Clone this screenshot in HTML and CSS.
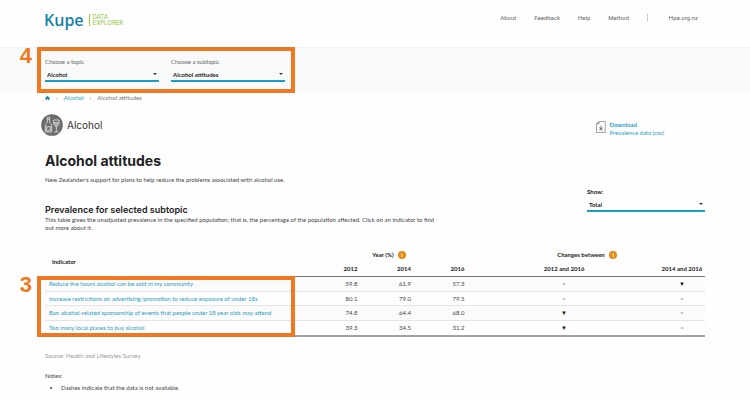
FILE: index.html
```html
<!DOCTYPE html>
<html lang="en">
<head>
<meta charset="utf-8">
<title>Kupe Data Explorer</title>
<link rel="stylesheet" href="styles.css">
</head>
<body>
<header class="header">
  <a class="logo" href="#"><span class="logo-name">Kupe</span><span class="logo-tag">DATA<br>EXPLORER</span></a>
  <nav class="nav">
    <a href="#">About</a>
    <a href="#">Feedback</a>
    <a href="#">Help</a>
    <a href="#">Method</a>
    <a class="nav-ext" href="#">Hpa.org.nz</a>
  </nav>
</header>

<section class="band">
  <div class="field">
    <label for="topic">Choose a topic</label>
    <div class="select"><select id="topic"><option>Alcohol</option></select></div>
  </div>
  <div class="field">
    <label for="subtopic">Choose a subtopic</label>
    <div class="select"><select id="subtopic"><option>Alcohol attitudes</option></select></div>
  </div>
  <div class="callout callout-filters"><span class="callout-number">4</span></div>
</section>

<main class="main">
  <nav class="crumbs">
    <a href="#" aria-label="Home"><svg class="home" viewBox="0 0 12 10"><path d="M6 0 12 5H10.500V10H7V6.500H5V10H1.500V5H0Z"/></svg></a>
    <span>›</span>
    <a href="#">Alcohol</a>
    <span>›</span>
    <span>Alcohol attitudes</span>
  </nav>

  <div class="topic-row">
    <div class="topic">
      <svg class="topic-icon" viewBox="0 0 66 66">
        <circle cx="33" cy="33" r="32.500" fill="#6b6b6b"/>
        <g fill="none" stroke="#e6e6e6" stroke-width="2.500" stroke-linejoin="round">
          <path d="M19 10h7v14c0 4 6 5 6 11v19H13V35c0-6 6-7 6-11Z"/>
          <path d="M19 16h7M17 38h11v11H17Z"/>
          <path d="M38 18h16c2 10 0 19-8 19s-10-9-8-19ZM46 37v16M39 54h14M38 26h16"/>
        </g>
        <path d="M40 28h12c0 5-2 7-6 7s-6-2-6-7Z" fill="#bdbdbd"/>
      </svg>
      <span>Alcohol</span>
    </div>
    <a class="download" href="#">
      <svg class="file" viewBox="0 0 28 34"><path d="M8 1.500H26V32.500H1.500V8Z" fill="#fff" stroke="#777" stroke-width="2"/><path d="M8 1.500V8H1.500" fill="none" stroke="#555" stroke-width="2"/><path d="M14 13v8M10 18l4 5 4-5M9 25h10" fill="none" stroke="#444" stroke-width="2"/></svg>
      <span><strong>Download</strong><br>Prevalence data (csv)</span>
    </a>
  </div>

  <h1>Alcohol attitudes</h1>
  <p class="lead">New Zealander's support for plans to help reduce the problems associated with alcohol use.</p>

  <div class="intro">
    <div class="intro-text">
      <h2>Prevalence for selected subtopic</h2>
      <p>This table gives the unadjusted prevalence in the specified population; that is, the percentage of the population affected. Click on an indicator to find<br>out more about it.</p>
    </div>
    <div class="field show">
      <label for="show">Show:</label>
      <div class="select"><select id="show"><option>Total</option></select></div>
    </div>
  </div>

  <div class="table-wrap">
    <table>
      <colgroup><col class="c-name"><col class="c-year"><col class="c-year"><col class="c-year"><col class="c-change"><col class="c-last"></colgroup>
      <thead>
        <tr><th class="ind" rowspan="2">Indicator</th><th colspan="3">Year (%) <span class="info">i</span></th><th colspan="2">Changes between <span class="info">i</span></th></tr>
        <tr><th class="num">2012</th><th class="num">2014</th><th class="num">2016</th><th>2012 and 2016</th><th>2014 and 2016</th></tr>
      </thead>
      <tbody>
        <tr><td><a href="#">Reduce the hours alcohol can be sold in my community</a></td><td class="num">59.8</td><td class="num">61.9</td><td class="num">57.3</td><td class="mark same">=</td><td class="mark">▼</td></tr>
        <tr><td><a href="#">Increase restrictions on advertising/promotion to reduce exposure of under 18s</a></td><td class="num">80.1</td><td class="num">79.0</td><td class="num">79.5</td><td class="mark same">=</td><td class="mark same">=</td></tr>
        <tr><td><a href="#">Ban alcohol-related sponsorship of events that people under 18 year olds may attend</a></td><td class="num">74.8</td><td class="num">64.4</td><td class="num">68.0</td><td class="mark">▼</td><td class="mark same">=</td></tr>
        <tr><td><a href="#">Too many local places to buy alcohol</a></td><td class="num">39.3</td><td class="num">34.5</td><td class="num">31.2</td><td class="mark">▼</td><td class="mark same">=</td></tr>
      </tbody>
    </table>
    <div class="callout callout-rows"><span class="callout-number">3</span></div>
  </div>

  <p class="source">Source: Health and Lifestyles Survey</p>
  <p class="notes">Notes:</p>
  <ul><li>Dashes indicate that the data is not available.</li></ul>
</main>
</body>
</html>
```
FILE: styles.css
```css
* { box-sizing: border-box; }
body { margin: 0; background: #fefefe; color: #444; font: 6px/8px Lato, "Liberation Sans", sans-serif; }
a { color: #2a9cc4; text-decoration: none; }
h1, h2, p, ul { margin: 0; }

.header { display: flex; justify-content: space-between; height: 47px; padding: 8px 52px 0 44px; }
.logo { display: flex; align-items: center; gap: 5px; height: 24px; }
.logo-name { font: 600 16px/24px "Open Sans", sans-serif; color: #1582a4; }
.logo-tag { padding-left: 3px; border-left: 1px solid #9bcb4b; color: #8fc63a; font: 6px/6px Inter, sans-serif; }
.nav { display: flex; gap: 18px; height: 20px; align-items: center; font: 6px/8px Roboto, sans-serif; }
.nav a { color: #666; }
.nav-ext { padding-left: 21px; border-left: 1px solid #ccc; }

.band { position: relative; display: flex; gap: 12px; padding: 10px 45px 9px; background: #f8faf9; border-top: 1px solid #f3f5f4; }
.field { width: 114px; color: #666; }
.field label { display: block; }
.select { position: relative; margin-top: 3px; border-bottom: 2px solid #1a9dcb; }
.select::after { content: ""; position: absolute; right: 2px; top: 4px; border: 2px solid transparent; border-top: 2px solid #333; border-bottom: 0; }
select { display: block; width: 100%; height: 11px; padding: 0 2px; border: 0; background: none; appearance: none; color: #222; font: 700 6px/8px Lato, sans-serif; }

.callout { position: absolute; border: 4px solid #f07821; pointer-events: none; }
.callout-filters { left: 37px; top: -1px; width: 258px; height: 46px; }
.callout-rows { left: -8px; bottom: 0; width: 258px; height: 61px; }
.callout-number { position: absolute; right: 100%; top: -6px; margin-right: 9px; color: #f07821; font: bold 22px/22px "Liberation Sans", sans-serif; }

.main { padding: 3px 45px 8px; }
.crumbs { display: flex; gap: 6px; color: #777; }
.home { display: block; width: 5px; height: 8px; fill: #1582a4; }
.topic-row { display: flex; justify-content: space-between; margin: 10px 41px 0 -4px; }
.topic { display: flex; align-items: center; gap: 4px; color: #333; font-family: Inter, sans-serif; font-size: 10px; }
.topic-icon { width: 22px; height: 22px; }
.download { display: flex; gap: 3px; padding-top: 9px; }
.file { width: 10px; height: 12px; }
h1 { margin-top: 14px; color: #222; font: bold 14px/20px Inter, sans-serif; }
.lead { margin-top: 5px; }
.intro { display: flex; justify-content: space-between; margin-top: 4px; }
.intro-text { padding-top: 16px; }
h2 { color: #222; font: 600 9px/12px Inter, sans-serif; }
.show { width: 118px; }
.show label { color: #222; font-weight: 700; }

.table-wrap { position: relative; margin-top: 15px; }
table { width: 100%; table-layout: fixed; border-collapse: separate; border-spacing: 0; border-bottom: 2px solid #a3a3a3; }
.c-name { width: 40%; }
.c-year { width: 8.1%; }
.c-change { width: 28.7%; }
.c-last { width: 7%; }
th { height: 15px; padding: 0; color: #222; font-weight: 700; line-height: 8px; white-space: nowrap; }
thead tr + tr th, th.ind { border-bottom: 1px solid #777; }
th.ind { padding-left: 7px; text-align: left; }
td { height: 14px; padding: 0 0 0 4px; line-height: 8px; border-bottom: 1px solid #e4e4e4; white-space: nowrap; }
tbody tr:nth-child(odd) td { height: 15px; background: #fbfbfb; }
tbody tr:last-child td { border-bottom: 0; }
th.num, td.num { padding: 0 5px 0 0; text-align: right; }
td.mark { padding: 0; text-align: center; color: #111; font-size: 6px; }
td.same { color: #999; }
.info { display: inline-block; width: 8px; margin-left: 3px; border-radius: 50%; background: #e58a12; color: #fff; text-align: center; }

.source { margin-top: 15px; color: #999; }
.notes { margin-top: 12px; }
ul { margin-top: 4px; padding-left: 16px; }
```
